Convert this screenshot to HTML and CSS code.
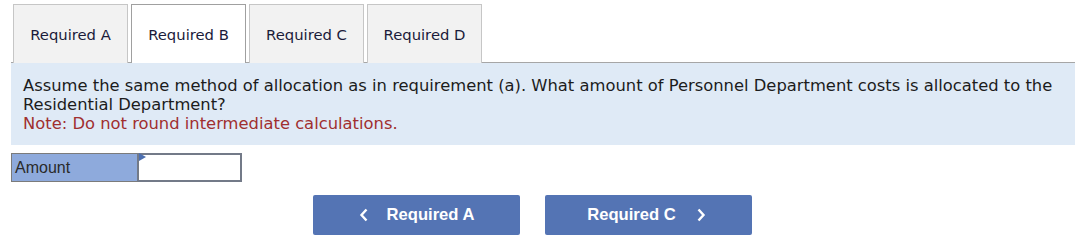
FILE: index.html
```html
<!DOCTYPE html>
<html>
<head>
<meta charset="utf-8">
<link rel="stylesheet" href="styles.css">
</head>
<body>
<div class="wrap">
  <div class="tabs">
    <div class="tab">Required A</div>
    <div class="tab active">Required B</div>
    <div class="tab">Required C</div>
    <div class="tab">Required D</div>
  </div>
  <div class="panel">
    <p class="q">Assume the same method of allocation as in requirement (a). What amount of Personnel Department costs is allocated to the Residential Department?</p>
    <p class="note">Note: Do not round intermediate calculations.</p>
  </div>
  <div class="answer">
    <div class="label">Amount</div>
    <div class="input"><span class="flag"></span></div>
  </div>
  <div class="nav">
    <div class="btn"><svg class="chev" width="10" height="14" viewBox="0 0 10 14"><path d="M7.5 1.5 L2.5 7 L7.5 12.5" fill="none" stroke="#fff" stroke-width="2.4"/></svg><span>Required A</span></div>
    <div class="btn next"><span>Required C</span><svg class="chev" width="10" height="14" viewBox="0 0 10 14"><path d="M2.5 1.5 L7.5 7 L2.5 12.5" fill="none" stroke="#fff" stroke-width="2.4"/></svg></div>
  </div>
</div>
</body>
</html>
```
FILE: styles.css
```css
html, body { margin: 0; padding: 0; background: #fff; }
body { font-family: "DejaVu Sans", Verdana, sans-serif; }
.wrap { padding: 4px 5px 0 11px; width: 1064px; }
.tabs {
  display: flex;
  gap: 3px;
  padding-left: 2px;
  border-bottom: 1px solid #a6a6a6;
  height: 58px;
}
.tab {
  width: 113px;
  height: 57px;
  border: 1px solid #c6c6c6;
  border-bottom: none;
  background: #f2f2f2;
  color: #1b1b3a;
  font-size: 14.8px;
  display: flex;
  align-items: center;
  justify-content: center;
  box-sizing: content-box;
  padding-top: 1px;
}
.tab.active {
  background: #fff;
  border-color: #a0a0a0;
  height: 58px;
  padding-top: 0;
  margin-bottom: -1px;
}
.panel {
  background: #dfeaf6;
  padding: 14px 12px 10px 12px;
  height: 58px;
  color: #1c1c1c;
  font-size: 16.35px;
  line-height: 18.6px;
}
.panel p { margin: 0; }
.note { color: #a02f2f; margin-top: 1px !important; }
.answer {
  display: flex;
  margin-top: 8px;
  height: 29px;
}
.label {
  background: #8eaadc;
  border: 1px solid #7b7b7b;
  border-right: none;
  font-family: "Liberation Sans", Arial, sans-serif;
  font-size: 16px;
  color: #2a2a2a;
  display: flex;
  align-items: center;
  padding-left: 3px;
  box-sizing: border-box;
  width: 126px;
}
.input {
  position: relative;
  width: 105px;
  background: #fff;
  border: 2px solid #737a88;
  box-sizing: border-box;
}
.flag {
  position: absolute;
  left: 0;
  width: 0;
  height: 0;
  border-top: 4px solid transparent;
  border-bottom: 4px solid transparent;
  border-left: 7px solid #4c6fb0;
  top: -2px;
}
.nav {
  display: flex;
  gap: 25px;
  margin-top: 13px;
  padding-left: 302px;
}
.btn {
  width: 207px;
  height: 40px;
  background: #5474b4;
  border-radius: 2px;
  color: #fff;
  font-family: "Liberation Sans", Arial, sans-serif;
  font-weight: bold;
  font-size: 16.6px;
  display: flex;
  align-items: center;
  justify-content: center;
  gap: 18px;
}
.btn.next { gap: 20px; padding-right: 4px; box-sizing: border-box; }
.chev { display: block; }
```
